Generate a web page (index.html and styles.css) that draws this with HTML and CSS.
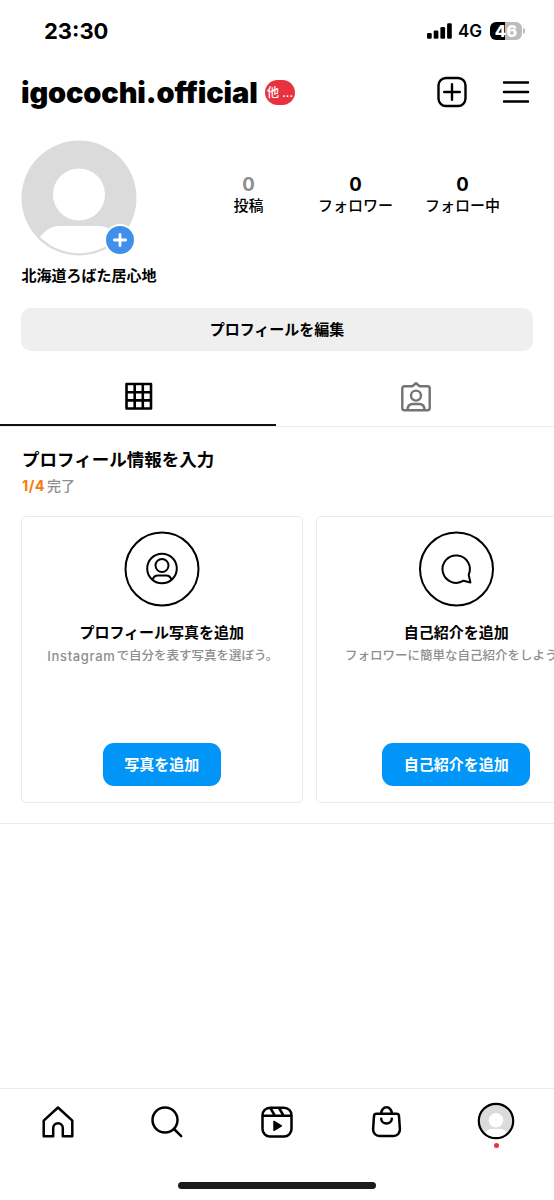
FILE: index.html
```html
<!DOCTYPE html>
<html lang="ja">
<head>
<meta charset="utf-8">
<title>igocochi.official</title>
<link rel="stylesheet" href="styles.css">
</head>
<body>
<div class="screen">
  <div class="status">
    <span class="time">23:30</span>
    <div class="status-right">
      <svg class="signal" width="26" height="16" viewBox="0 0 26 16"><rect x="0" y="10" width="4.7" height="5.7" rx="1.3"/><rect x="6.7" y="7.5" width="4.7" height="8.2" rx="1.3"/><rect x="13.4" y="4" width="4.7" height="11.7" rx="1.3"/><rect x="20.1" y="0.2" width="4.7" height="15.5" rx="1.3"/></svg>
      <span class="network">4G</span>
      <span class="battery">46</span>
      <span class="battery-cap"></span>
    </div>
  </div>

  <header class="header">
    <h1 class="username">igocochi.official</h1>
    <span class="badge">他 ...</span>
    <div class="header-icons">
      <svg width="30" height="32" viewBox="0 0 30 32" fill="none" stroke="#000" stroke-width="2.4" stroke-linecap="round"><rect x="1.5" y="2" width="27" height="28" rx="7.5"/><path d="M7.2 16h15.6M15 8.2v15.6"/></svg>
      <svg width="28" height="32" viewBox="0 0 28 32" fill="none" stroke="#000" stroke-width="2.5" stroke-linecap="round"><path d="M2 6.5h24M2 16h24M2 25.5h24"/></svg>
    </div>
  </header>

  <section class="profile">
    <div class="avatar">
      <svg width="116" height="116" viewBox="0 0 116 116"><circle cx="58" cy="58" r="57.5" fill="#dbdbdb"/><circle cx="58" cy="54.5" r="26" fill="#fff"/><path d="M19 97C24 91 29 86 38 86H78C87 86 92 91 97 97A55 55 0 0 1 19 97Z" fill="#fff"/></svg>
      <svg class="avatar-add" width="32" height="32" viewBox="0 0 32 32"><circle cx="16" cy="16" r="16" fill="#fff"/><circle cx="16" cy="16" r="14" fill="#408fea"/><path d="M16 10.3v11.4M10.3 16h11.4" stroke="#fff" stroke-width="2.8" stroke-linecap="round"/></svg>
    </div>
    <div class="stats">
      <div class="stat"><b class="count muted">0</b><span>投稿</span></div>
      <div class="stat"><b class="count">0</b><span>フォロワー</span></div>
      <div class="stat"><b class="count">0</b><span>フォロー中</span></div>
    </div>
  </section>
  <div class="name">北海道ろばた居心地</div>
  <button class="edit">プロフィールを編集</button>

  <nav class="tabs">
    <div class="tab active">
      <svg width="28" height="28" viewBox="0 0 28 28" fill="none" stroke="#000" stroke-width="2.6" stroke-linejoin="round"><path d="M1.500 2h24.500v24.500H1.500zM9.700 2v24.500M17.800 2v24.500M1.500 10.200h24.500M1.500 18.400h24.500"/></svg>
    </div>
    <div class="tab">
      <svg width="30" height="30" viewBox="0 0 30 30" fill="none" stroke="#737373" stroke-width="2.4" stroke-linejoin="round"><path d="M3.500 4.200H11.300L15 1.200l3.700 3h7.800a2.200 2.200 0 0 1 2.200 2.200v19.700a2.200 2.200 0 0 1-2.200 2.200h-23a2.200 2.200 0 0 1-2.200-2.200V6.400a2.200 2.200 0 0 1 2.200-2.200Z"/><circle cx="15" cy="13.600" r="5"/><path d="M6.500 28c0-4 2.300-6 5.500-6h6c3.200 0 5.500 2 5.500 6"/></svg>
    </div>
  </nav>

  <section class="setup">
    <h2 class="setup-title">プロフィール情報を入力</h2>
    <p class="progress"><b>1/4</b><span>完了</span></p>
    <div class="cards">
      <article class="card">
        <svg class="card-icon" width="76" height="76" viewBox="0 0 76 76" fill="none" stroke="#000" stroke-width="2"><circle cx="38" cy="38" r="36.500"/><circle cx="38" cy="37.500" r="14.800"/><circle cx="38" cy="34.500" r="6.500"/><path d="M28.500 49C29.200 46 31.300 44.400 34 44.400h8c2.700 0 4.800 1.600 5.500 4.600"/></svg>
        <h3 class="card-title">プロフィール写真を追加</h3>
        <p class="card-text intro"><span class="latin">Instagram</span><span>で自分を表す写真を選ぼう。</span></p>
        <button class="action">写真を追加</button>
      </article>
      <article class="card">
        <svg class="card-icon" width="76" height="76" viewBox="0 0 76 76" fill="none" stroke="#000" stroke-width="2" stroke-linejoin="round"><circle cx="38.500" cy="38" r="36.500"/><path d="M50.700 43.700A13.700 13.700 0 1 0 45.500 49.700C47.700 50.300 50.200 51.300 52.400 51.500C52 49 51 46.300 50.700 43.700Z"/></svg>
        <h3 class="card-title">自己紹介を追加</h3>
        <p class="card-text intro">フォロワーに簡単な自己紹介をしよう。</p>
        <button class="action bio">自己紹介を追加</button>
      </article>
    </div>
  </section>

  <nav class="bottom">
    <div class="bottom-item"><svg width="32" height="32" viewBox="0 0 32 32" fill="none" stroke="#000" stroke-width="2.500" stroke-linejoin="round"><path d="M1.700 30.200V14.700L16 1.500 30.300 14.700V30.200H20.800V22a4.800 4.800 0 0 0-9.600 0v8.200Z"/></svg></div>
    <div class="bottom-item"><svg width="32" height="32" viewBox="0 0 32 32" fill="none" stroke="#000" stroke-width="2.500" stroke-linecap="round"><circle cx="14" cy="14" r="12.500"/><path d="M23 23l7.200 7.200"/></svg></div>
    <div class="bottom-item"><svg width="32" height="32" viewBox="0 0 32 32" fill="none" stroke="#000" stroke-width="2.500" stroke-linejoin="round"><rect x="1.500" y="1.700" width="29" height="28.800" rx="7.500"/><path d="M1.500 9.800h29M9.300 2l4.500 7.500M18 2l4.500 7.500"/><path d="M13 15.500v8.800l7.400-4.400Z" fill="#000" stroke-width="1.500"/></svg></div>
    <div class="bottom-item"><svg width="32" height="34" viewBox="0 0 32 34" fill="none" stroke="#000" stroke-width="2.500" stroke-linecap="round"><path d="M5.500 8.800h20a2.500 2.500 0 0 1 2.500 2.300l.9 12.900c.2 4-2.500 7-6.500 7H8.600c-4 0-6.700-3-6.500-7L3 11.100A2.500 2.500 0 0 1 5.500 8.800ZM10.200 8.500a5.300 6.200 0 0 1 10.600 0M10.200 13.800a5.300 4.700 0 0 0 10.600 0"/></svg></div>
    <div class="bottom-item me"><svg width="38" height="38" viewBox="0 0 38 38"><circle cx="19" cy="19" r="16.500" fill="#dbdbdb"/><circle cx="19" cy="18.300" r="7.200" fill="#fff"/><path d="M8 31c2-3 4-4 6.500-4h9c2.500 0 4.500 1 6.500 4-6 5.300-16 5.300-22 0Z" fill="#fff"/><circle cx="19" cy="19" r="17.200" fill="none" stroke="#000" stroke-width="2.200"/></svg><i class="dot"></i></div>
  </nav>
  <div class="home-bar"></div>
</div>
</body>
</html>
```
FILE: styles.css
```css
* { box-sizing: border-box; margin: 0; padding: 0; }
body { background: #fff; }
svg { display: block; flex: none; }
button { border: 0; font: inherit; white-space: nowrap; }
.screen { width: 554px; height: 1200px; overflow: hidden; display: flex; flex-direction: column; background: #fff; color: #000; font-family: Inter, "Noto Sans CJK JP", sans-serif; }

.status { flex: none; height: 61px; padding: 0 29px 0 44px; display: flex; align-items: center; justify-content: space-between; }
.time { font-size: 22px; font-weight: 700; line-height: 26px; }
.status-right { display: flex; align-items: center; }
.signal { margin-right: 5px; }
.network { width: 26px; margin-right: 6px; font-size: 17px; font-weight: 600; line-height: 20px; letter-spacing: -0.1px; }
.battery { width: 32px; height: 18px; border-radius: 6px; background: linear-gradient(90deg, #000 46%, #bcbcbc 46%); color: #fff; font-size: 16.5px; font-weight: 800; line-height: 18px; text-align: center; }
.battery-cap { width: 2px; height: 6px; margin-left: 1px; border-radius: 0 2px 2px 0; background: #bcbcbc; }

.header { flex: none; height: 62px; padding: 0 24px 0 21px; display: flex; align-items: center; }
.username { padding-top: 2px; font-size: 29px; font-weight: 900; line-height: 36px; letter-spacing: -0.15px; width: 244px; white-space: nowrap; }
.badge { width: 30px; height: 25px; border-radius: 13px; background: #e8323f; color: #fff; font-size: 12px; font-weight: 500; line-height: 25px; text-align: center; white-space: nowrap; }
.header-icons { margin-left: auto; display: flex; gap: 35px; }

.profile { flex: none; height: 136px; padding: 17px 38px 0 21px; display: flex; justify-content: space-between; }
.avatar { position: relative; width: 116px; height: 116px; }
.avatar-add { position: absolute; left: 83px; top: 84px; }
.stats { display: flex; margin-top: 33px; }
.stat { width: 107px; display: flex; flex-direction: column; align-items: center; font-size: 15px; font-weight: 500; line-height: 20px; }
.count { font-size: 18.5px; font-weight: 700; line-height: 23px; }
.muted { color: #8e8e8e; }
.name { flex: none; height: 49px; padding: 6px 21px 0 21.5px; font-size: 15px; font-weight: 700; line-height: 22px; }
.edit { flex: none; height: 43px; margin: 0 21px; border-radius: 10px; background: #efefef; font-size: 15px; font-weight: 700; line-height: 43px; }

.tabs { flex: none; height: 76px; display: grid; grid-template-columns: 276px 278px; border-bottom: 1px solid #ededed; }
.tab { display: flex; justify-content: center; padding-top: 31px; padding-left: 1px; }
.active { border-bottom: 2px solid #111; }

.setup { flex: none; height: 397px; padding: 19px 21px 0; border-bottom: 1px solid #eaeaea; }
.setup-title { padding-left: 1px; font-size: 17.5px; font-weight: 700; line-height: 28px; }
.progress { height: 20px; display: flex; gap: 2px; font-size: 14px; font-weight: 500; line-height: 20px; margin-top: 2px; color: #8e8e8e; }
.progress b { padding-left: 1px; color: #f57c0b; font-weight: 700; font-size: 14.5px; letter-spacing: 0.4px; }
.cards { display: flex; gap: 13px; margin-top: 20px; }
.card { flex: none; width: 281.5px; height: 287px; padding: 14px 0 16px; border: 1px solid #eaeaea; border-radius: 5px; display: flex; flex-direction: column; align-items: center; }
.card-title { margin-top: 14px; font-size: 15px; font-weight: 700; line-height: 24px; }
.card-text { display: flex; gap: 1px; color: #8e8e8e; font-size: 12.5px; font-weight: 500; line-height: 22px; white-space: nowrap; }
.intro { padding-left: 2px; }
.latin { font-size: 13px; letter-spacing: 0.65px; }
.action { width: 118px; height: 43px; margin-top: auto; border-radius: 11px; background: #0095f6; color: #fff; font-size: 15px; font-weight: 600; line-height: 43px; }
.bio { width: 148px; }

.bottom { flex: none; height: 88px; margin-top: 264px; padding: 0 3px; border-top: 1px solid #eaeaea; display: grid; grid-template-columns: repeat(5, 1fr); }
.bottom-item { height: 65px; display: flex; flex-direction: column; align-items: center; justify-content: center; }
.dot { width: 5px; height: 5px; margin-top: 3px; border-radius: 50%; background: #e8323f; }
.me { padding-top: 7px; }
.home-bar { flex: none; width: 198px; height: 7px; margin: 6px auto 0; border-radius: 4px; background: #1c1c1c; }
```
